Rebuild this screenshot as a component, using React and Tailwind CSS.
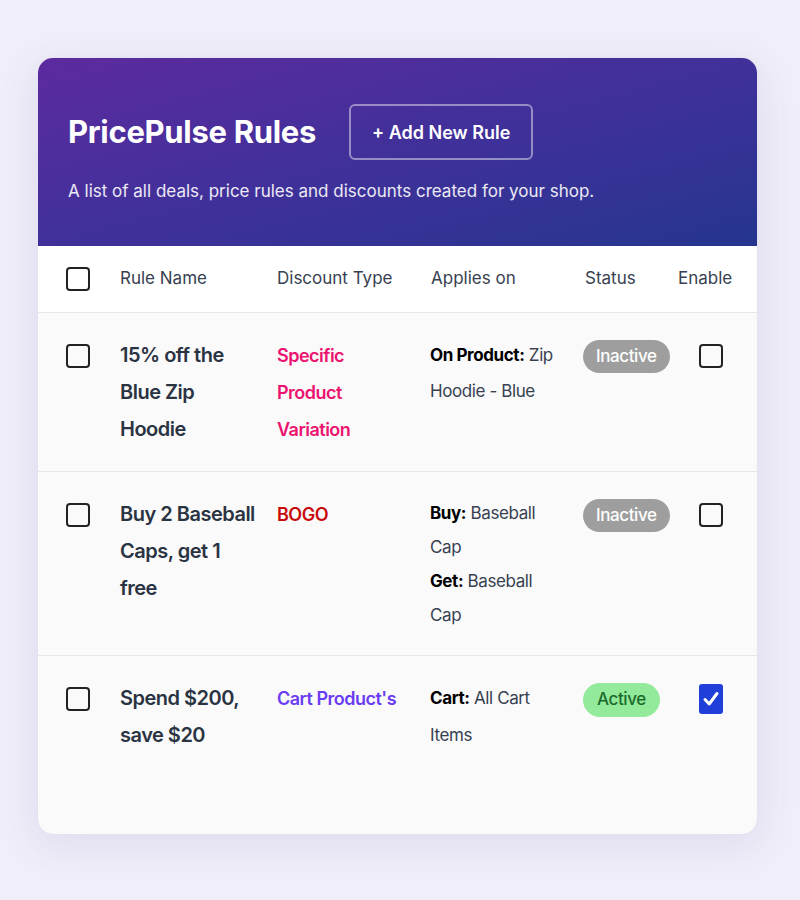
import React from 'react';

const rules = [
  {
    name: '15% off the Blue Zip Hoodie',
    type: 'Specific Product Variation',
    typeClass: 'text-[#eb136f]',
    applies: [{ label: 'On Product:', value: 'Zip Hoodie - Blue' }],
    appliesLeading: 'leading-[36px]',
    active: false,
  },
  {
    name: 'Buy 2 Baseball Caps, get 1 free',
    type: 'BOGO',
    typeClass: 'text-[#c80a0a]',
    applies: [
      { label: 'Buy:', value: 'Baseball Cap' },
      { label: 'Get:', value: 'Baseball Cap' },
    ],
    appliesLeading: 'leading-[34px]',
    active: false,
  },
  {
    name: 'Spend $200, save $20',
    type: "Cart Product's",
    typeClass: 'text-[#6a3cf2]',
    applies: [{ label: 'Cart:', value: 'All Cart Items' }],
    appliesLeading: 'leading-[37px]',
    active: true,
  },
];

function Box({ checked }) {
  if (checked) {
    return (
      <div className="w-[24px] h-[30px] rounded-[3px] bg-[#1f3fd8] flex items-center justify-center">
        <svg width="18" height="18" viewBox="0 0 18 18" fill="none">
          <path d="M3 9.5 L7.2 14 L15 3.5" stroke="white" strokeWidth="3" strokeLinecap="round" strokeLinejoin="round" />
        </svg>
      </div>
    );
  }
  return <div className="w-[24px] h-[24px] rounded-[4px] border-2 border-[#222]" />;
}

export default function App() {
  return (
    <div className="min-h-screen bg-[#f0eef9] pt-[57px] pl-[37px] font-['Inter',sans-serif]">
      <div className="w-[721px] h-[778px] rounded-[16px] overflow-hidden bg-[#fafafa] border border-[#e4e1f0] shadow-[0_10px_40px_rgba(90,70,160,0.12)] flex flex-col">
        {/* Kopfbereich */}
        <div className="bg-linear-to-br from-[#5c2a9f] via-[#40309a] to-[#24358f] pl-[30px] pt-[46px] pb-[42px]">
          <div className="flex items-center gap-[33px]">
            <h1 className="text-white text-[31px] font-bold leading-[40px] tracking-[-0.3px]">PricePulse Rules</h1>
            <button className="h-[56px] px-[21px] rounded-[6px] border-2 border-white/45 text-white text-[18px] font-semibold">
              + Add New Rule
            </button>
          </div>
          <p className="mt-[18px] text-white/90 text-[17px] leading-[26px]">
            A list of all deals, price rules and discounts created for your shop.
          </p>
        </div>

        {/* Tabellenkopf */}
        <div className="grid grid-cols-[82px_157px_153px_153px_95px_1fr] items-center h-[67px] bg-white border-b border-[#e5e7eb] text-[17px] text-[#374151]">
          <div className="pl-[28px]"><Box /></div>
          <div>Rule Name</div>
          <div>Discount Type</div>
          <div className="pl-[1px]">Applies on</div>
          <div className="pl-[2px]">Status</div>
          <div>Enable</div>
        </div>

        {/* Zeilen */}
        {rules.map((r, i) => (
          <div
            key={i}
            className={`grid grid-cols-[82px_157px_153px_153px_95px_1fr] items-start pt-6 pb-[23px] ${i < rules.length - 1 ? 'border-b border-[#e5e7eb]' : 'flex-1'}`}
          >
            <div className="pl-[28px] h-[37px] flex items-center"><Box /></div>
            <div className="w-[139px] text-[20px] font-semibold leading-[37px] tracking-[-0.5px] text-[#2a3342]">{r.name}</div>
            <div className={`w-[126px] text-[18px] font-semibold leading-[37px] tracking-[-0.5px] ${r.typeClass}`}>{r.type}</div>
            <div className={`w-[134px] text-[17px] tracking-[-0.4px] text-[#374151] ${r.appliesLeading}`}>
              {r.applies.map((a, j) => (
                <div key={j}>
                  <span className="font-bold text-black">{a.label}</span> {a.value}
                </div>
              ))}
            </div>
            <div className="pt-[3px]">
              {r.active ? (
                <span className="inline-flex items-center h-[34px] px-[14px] rounded-full bg-[#92ea9a] text-[#1c6b2c] text-[17px] font-medium tracking-[-0.4px]">Active</span>
              ) : (
                <span className="inline-flex items-center h-[33px] px-[13px] rounded-full bg-[#9e9e9e] text-white text-[17px] font-medium tracking-[-0.4px]">Inactive</span>
              )}
            </div>
            <div className="pl-[21px] h-[37px] flex items-center"><Box checked={r.active} /></div>
          </div>
        ))}
      </div>
    </div>
  );
}
